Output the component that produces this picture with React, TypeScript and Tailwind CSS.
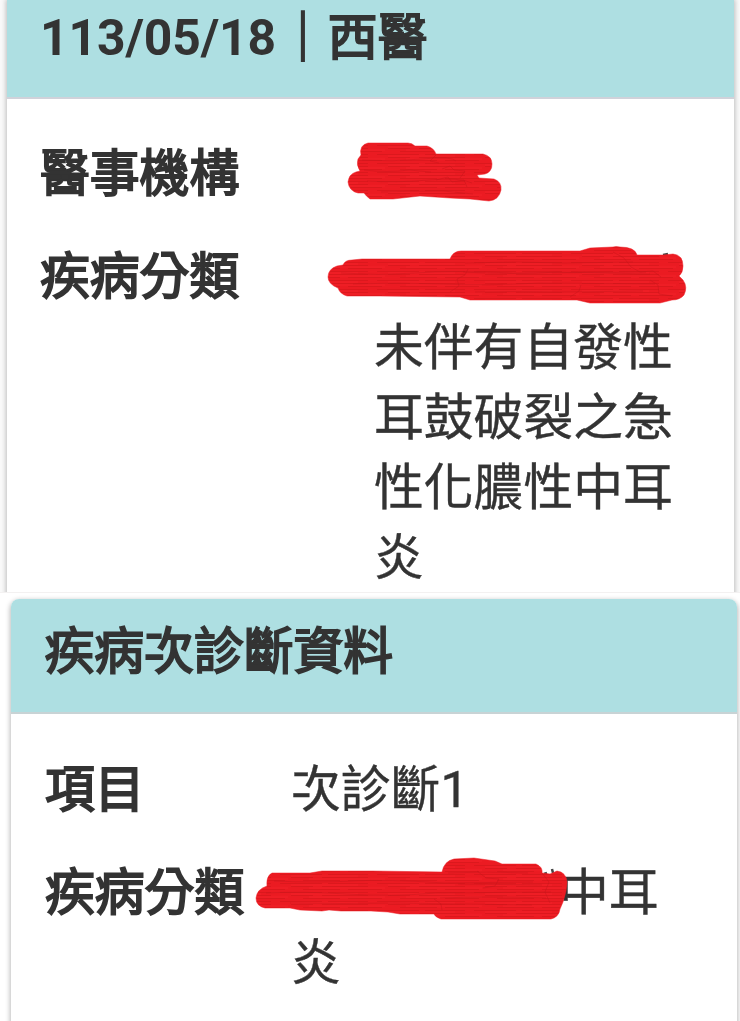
import type { ReactNode } from "react";

type Redaction = {
  id: string;
  className: string;
  width: number;
  height: number;
  viewBox: string;
  path: string;
  grooves: string[];
  specks?: string;
};

const institutionMark: Redaction = {
  id: "institution",
  className: "-ml-[34px] -mt-px",
  width: 170,
  height: 70,
  viewBox: "340 138 170 70",
  path: "M368 143H408Q412 143 415 146L427 146Q434 148 436 154H483Q492 156 492 164Q492 172 485 174L477 175L479 178L494 179Q502 182 501 190Q499 200 489 201L470 199L450 198L420 196L402 198L393 199L370 199Q366 196 364 193H358Q349 191 348 182Q349 174 356 172L360 171Q356 165 358 159L361 155Q359 145 368 143Z",
  grooves: [
    "M362 160q30 2 60-1t34 2M364 170q24 3 45 0l22 2",
    "M367 181q29 2 61-1t44 3M381 192q30-1 62-1l30 3",
    "M436 155l-6 6 9 2M442 169l8-3 4 4 11 1-5 7M436 180l12-3 4 5 12-2 3 7",
  ],
};

const categoryMark: Redaction = {
  id: "category",
  className: "-ml-[54px]",
  width: 370,
  height: 70,
  viewBox: "320 242 370 70",
  path: "M337 266L343 265Q345 260 352 260L362 259H450Q453 251 461 251H580L590 248L613 247Q616 246 620 247Q635 247 637 255H663L673 254Q683 255 683 266Q683 273 679 276L683 280Q688 287 684 295Q680 300 672 300L660 303H590L577 300H470L460 297L380 296L347 296Q340 294 338 288Q328 284 328 277Q328 269 337 266Z",
  grooves: [
    "M341 273q38 3 75 0t97 0l133-1M353 284q46-2 88 0t98-1l116 1",
    "M465 263q50-2 100 0l68-1M463 272q52 3 95 0l92 2M475 292q51-1 85 0l83-1",
    "M450 292l9-6-2-7 8-4 3-6M570 297l9-6 2-6M613 252l11 6 7 9 9 5 13-1 8 6M650 280l8 5 1 9 13 2",
  ],
  specks: "M663 255l5 -1",
};

const secondaryMark: Redaction = {
  id: "secondary",
  className: "-ml-[41px] -mt-px",
  width: 330,
  height: 70,
  viewBox: "250 857 330 70",
  path: "M272 873L310 873L322 871H372L442 872Q444 861 454 859L474 858L495 861L502 864L536 864Q543 867 542 873L550 874L557 871Q566 872 567 882Q567 890 563 902L560 909Q559 917 551 919H441Q435 917 434 914L400 914L388 912L371 911L341 911L329 910L322 911L300 910L290 908H265Q256 906 256 898Q257 889 267 886Q266 876 272 873Z",
  grooves: [
    "M274 881q44 2 78 0t93 2l88-1M266 893q36-2 80 1t90-1l115-1M290 903q52 1 104 0l138 2",
    "M448 873q38-2 80 0M458 884l84 1M440 898q48-2 106 0",
    "M434 899l7 5 1 6M477 871l9 7 13 1-4 7-12 2M542 873l7 9-4 10 5 11",
  ],
  specks: "M544 874l3 -1M552 869l1 4",
};

function RedactionStroke({ mark }: { mark: Redaction }) {
  return (
    <svg
      className={`relative block max-w-none shrink-0 ${mark.className}`}
      width={mark.width}
      height={mark.height}
      viewBox={mark.viewBox}
      aria-hidden="true"
    >
      <defs>
        <pattern id={mark.id} width="97" height="9" patternUnits="userSpaceOnUse">
          <rect width="97" height="9" fill="#eb1b22" />
          <path
            d="M0 1.5h31m6 0h40m9 0h11M0 4.5h22m9 0h46M12 7.5h37m8 0h34"
            stroke="#d8161c"
            strokeWidth="0.8"
          />
          <path d="M0 3h67M18 6h76" stroke="#f5232a" strokeWidth="0.7" />
        </pattern>
      </defs>
      {mark.specks && <path d={mark.specks} stroke="#444" strokeWidth="2.5" />}
      <path
        d={mark.path}
        fill={`url(#${mark.id})`}
        stroke="#ed1c24"
        strokeWidth="0.5"
        strokeLinejoin="round"
      />
      {mark.grooves.map((d) => (
        <path key={d} d={d} fill="none" stroke="#c2161b" strokeWidth="0.7" opacity="0.6" />
      ))}
    </svg>
  );
}

function Heavy({ children }: { children: ReactNode }) {
  return (
    <span className="whitespace-nowrap [-webkit-text-stroke:2px_#333]">{children}</span>
  );
}

export default function App() {
  return (
    <main
      lang="zh-Hant"
      className="h-[1021px] w-[740px] overflow-hidden bg-white font-[Roboto,'Noto_Sans_CJK_TC',sans-serif] text-[49.8px] leading-[70px] text-[#333]"
    >
      {/* Visit record */}
      <section className="h-[593px] overflow-hidden border-b border-[#f3f1f1] bg-[#fafafa] pl-[7px]">
        <div className="h-[620px] w-[727px] bg-white shadow-[0_0_5px_1px_#bbb]">
          <header className="h-[99px] border-b-2 border-[#d0d2da] bg-[#aedfe2] pt-[3px] pl-[33px]">
            <h2 className="flex whitespace-nowrap">
              <span className="mr-0.5 font-bold tracking-[-0.1px]">113/05/18</span>
              <Heavy>｜西醫</Heavy>
            </h2>
          </header>
          <dl className="pt-[40px] pl-[33px]">
            <div className="flex h-[103px]">
              <dt className="w-[334px] shrink-0">
                <Heavy>醫事機構</Heavy>
              </dt>
              <dd>
                <RedactionStroke mark={institutionMark} />
              </dd>
            </div>
            <div className="flex">
              <dt className="w-[334px] shrink-0">
                <Heavy>疾病分類</Heavy>
              </dt>
              <dd className="w-[302px] [-webkit-text-stroke:0.4px_#333]">
                <RedactionStroke mark={categoryMark} />
                <p className="pt-px">未伴有自發性耳鼓破裂之急性化膿性中耳炎</p>
              </dd>
            </div>
          </dl>
        </div>
      </section>

      {/* Secondary diagnosis */}
      <section className="h-[428px] overflow-hidden pt-[6px] pl-[11px]">
        <div className="h-[460px] w-[726px] rounded-t-lg bg-white shadow-[0_2px_5px_1px_#bbb]">
          <header className="h-[115px] rounded-t-lg border-b-2 border-[#c8d3d5] bg-[#aedfe2] pt-[18px] pl-[33.5px]">
            <h2>
              <Heavy>疾病次診斷資料</Heavy>
            </h2>
          </header>
          <dl className="pt-[41px] pl-[34px]">
            <div className="flex h-[103px]">
              <dt className="w-[246px] shrink-0">
                <Heavy>項目</Heavy>
              </dt>
              <dd className="[-webkit-text-stroke:0.4px_#333]">次診斷1</dd>
            </div>
            <div className="flex">
              <dt className="w-[246px] shrink-0">
                <Heavy>疾病分類</Heavy>
              </dt>
              <dd className="[-webkit-text-stroke:0.4px_#333]">
                <div className="flex">
                  <RedactionStroke mark={secondaryMark} />
                  <span className="-ml-[21px]">中耳</span>
                </div>
                炎
              </dd>
            </div>
          </dl>
        </div>
      </section>
    </main>
  );
}
